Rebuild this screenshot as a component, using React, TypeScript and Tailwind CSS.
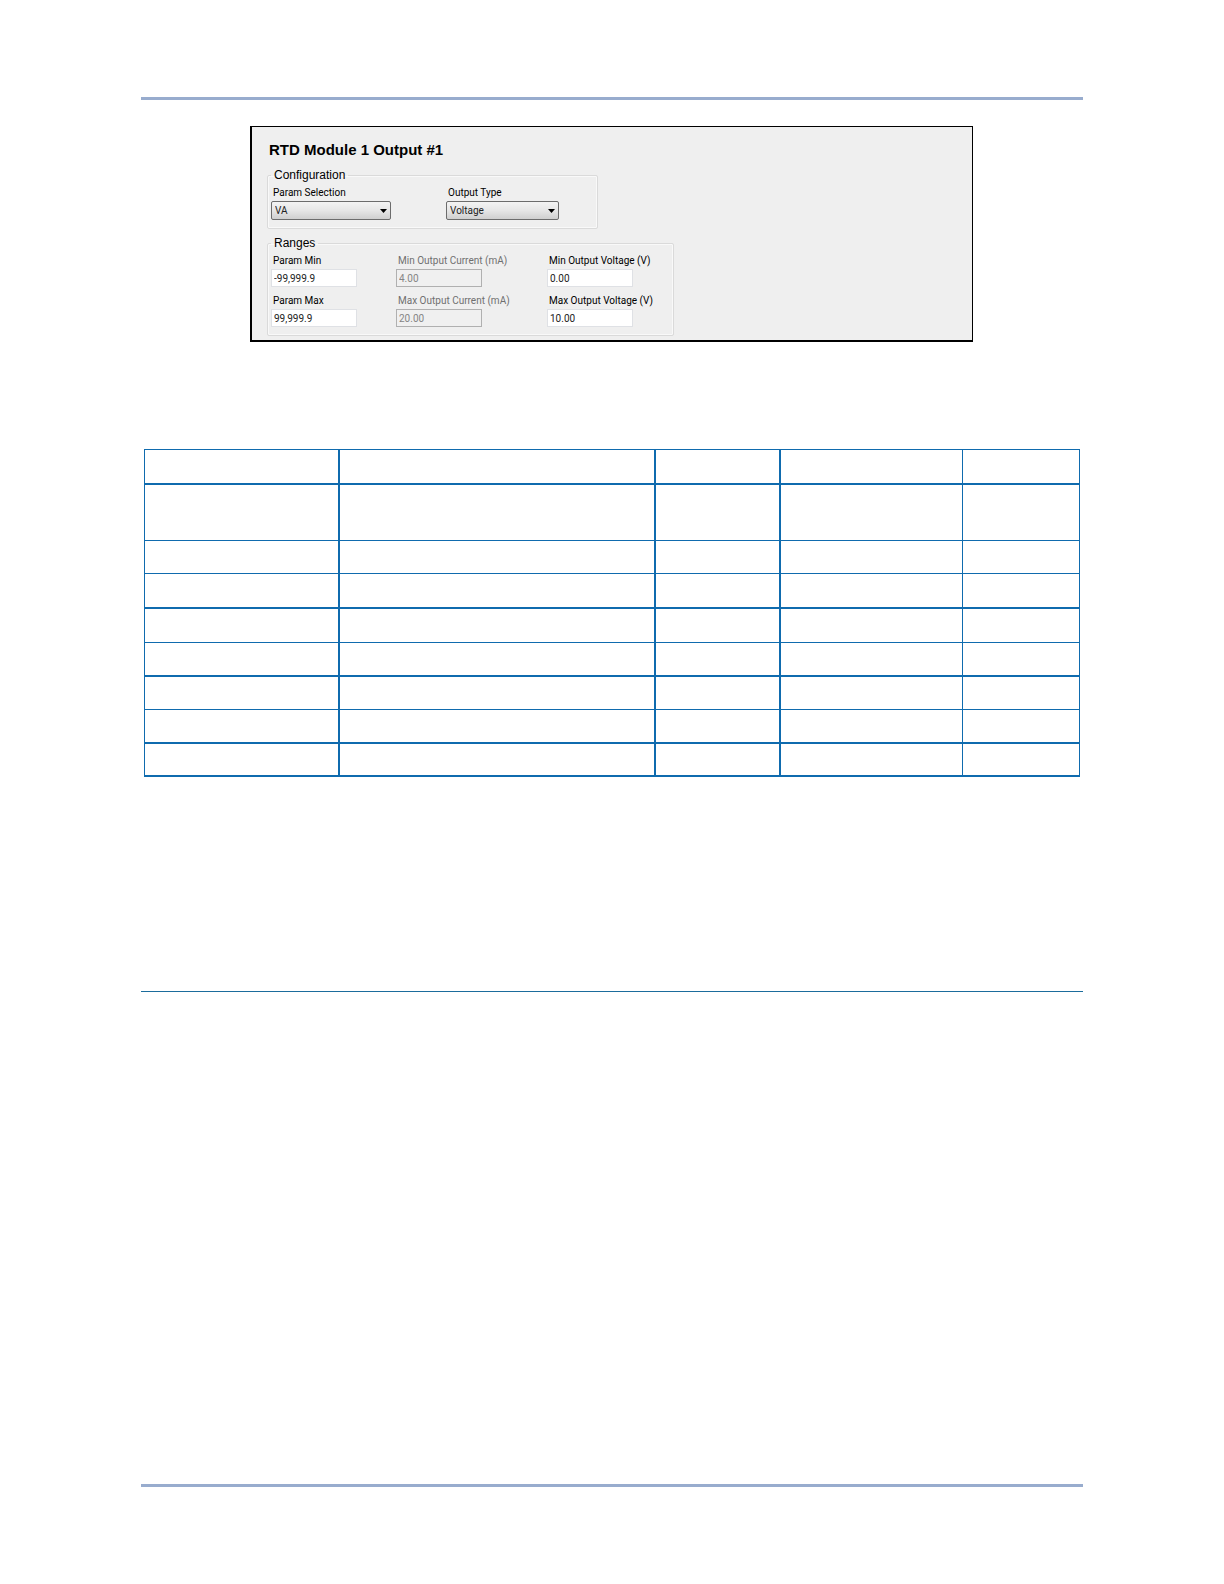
import React from "react";

type SelectProps = { id: string; label: string; options: string[]; className: string };

function SelectField({ id, label, options, className }: SelectProps) {
  return (
    <div>
      <label htmlFor={id} className="block pt-px pl-0.5 text-[10px] leading-4 whitespace-nowrap">
        {label}
      </label>
      <div className={`relative h-[19px] ${className}`}>
        <select
          id={id}
          className="block h-full w-full appearance-none rounded-xs border border-[#6c6c6c] bg-linear-to-b from-[#f3f3f3] via-[#e6e6e6] to-[#cfcfcf] pl-[3px] text-[10px] leading-4 text-[#222]"
        >
          {options.map((option) => (
            <option key={option}>{option}</option>
          ))}
        </select>
        <svg
          aria-hidden="true"
          viewBox="0 0 7 4"
          className="pointer-events-none absolute top-2 right-1 h-1 w-[7px]"
        >
          <path d="M0 0H7L3.5 4Z" fill="#000" />
        </svg>
      </div>
    </div>
  );
}

type TextProps = { id: string; label: string; value: string; disabled?: boolean };

function TextField({ id, label, value, disabled = false }: TextProps) {
  return (
    <div className={disabled ? "text-[#6f6f6f]" : "text-black"}>
      <label htmlFor={id} className="block pt-px pl-0.5 text-[10px] leading-4 whitespace-nowrap">
        {label}
      </label>
      <input
        id={id}
        type="text"
        defaultValue={value}
        disabled={disabled}
        className="block h-[18px] w-[86px] border border-[#dfe1e5] bg-white pl-0.5 text-[10px] leading-4 text-[#222] disabled:border-[#b0b0b0] disabled:bg-[#f0f0f0] disabled:text-[#858585]"
      />
    </div>
  );
}

const legendClass = "px-[3px] font-['Liberation_Sans',sans-serif] text-xs leading-4";
const fieldsetClass =
  "rounded-xs border border-[#dadada] pt-px pb-2 pl-[3px] shadow-[inset_0_0_0_1px_#f9f9f9]";

const rows = [
  "h-[36px] border-b-2",
  "h-[56px] border-b",
  "h-[33px] border-b",
  "h-[35px] border-b-2",
  "h-[34px] border-b",
  "h-[34px] border-b-2",
  "h-[33px] border-b",
  "h-[34px] border-b-2",
  "h-[33px] border-b-2",
];
const columns = ["border-r-2", "border-r-2", "border-r-2", "border-r", "border-r"];

export default function App() {
  return (
    <main className="min-h-screen bg-white px-[141px] pt-[97px] pb-[97px] font-[Roboto,sans-serif] text-black">
      <hr className="h-[3px] border-0 bg-[#98acce]" />

      <section className="mt-[26px] mr-[110px] ml-[109px] border-t border-r border-b-2 border-l-2 border-black bg-[#efefef] pt-[13px] pb-1 pl-[15px]">
        <h1 className="pl-0.5 font-['Liberation_Sans',sans-serif] text-[15px] leading-5 font-bold">
          RTD Module 1 Output #1
        </h1>
        <fieldset className={`mt-[7px] max-w-[331px] ${fieldsetClass}`}>
          <legend className={legendClass}>Configuration</legend>
          <div className="grid grid-cols-[175px_1fr]">
            <SelectField
              id="param-selection"
              label="Param Selection"
              options={["VA"]}
              className="w-[120px]"
            />
            <SelectField
              id="output-type"
              label="Output Type"
              options={["Voltage", "Current"]}
              className="w-[113px]"
            />
          </div>
        </fieldset>
        <fieldset className={`mt-1.5 max-w-[407px] ${fieldsetClass}`}>
          <legend className={legendClass}>Ranges</legend>
          <div className="grid grid-cols-[125px_151px_1fr] gap-y-[5px]">
            <TextField id="param-min" label="Param Min" value="-99,999.9" />
            <TextField id="min-current" label="Min Output Current (mA)" value="4.00" disabled />
            <TextField id="min-voltage" label="Min Output Voltage (V)" value="0.00" />
            <TextField id="param-max" label="Param Max" value="99,999.9" />
            <TextField id="max-current" label="Max Output Current (mA)" value="20.00" disabled />
            <TextField id="max-voltage" label="Max Output Voltage (V)" value="10.00" />
          </div>
        </fieldset>
      </section>

      <div className="mt-[107px] px-[3px]">
        <table className="w-full table-fixed border-separate border-spacing-0">
          <colgroup>
            <col className="w-[196px]" />
            <col className="w-[316px]" />
            <col className="w-[125px]" />
            <col className="w-[182px]" />
            <col className="w-[117px]" />
          </colgroup>
          <tbody>
            {rows.map((row, r) => (
              <tr key={r}>
                {columns.map((column, c) => (
                  <td
                    key={c}
                    className={`border-[#0f6bae] p-0 ${row} ${column} ${r === 0 ? "border-t" : ""} ${c === 0 ? "border-l" : ""}`}
                  />
                ))}
              </tr>
            ))}
          </tbody>
        </table>
      </div>

      <hr className="mt-[214px] h-px border-0 bg-[#1b6c9c]" />
      <hr className="mt-[492px] h-[3px] border-0 bg-[#98acce]" />
    </main>
  );
}
